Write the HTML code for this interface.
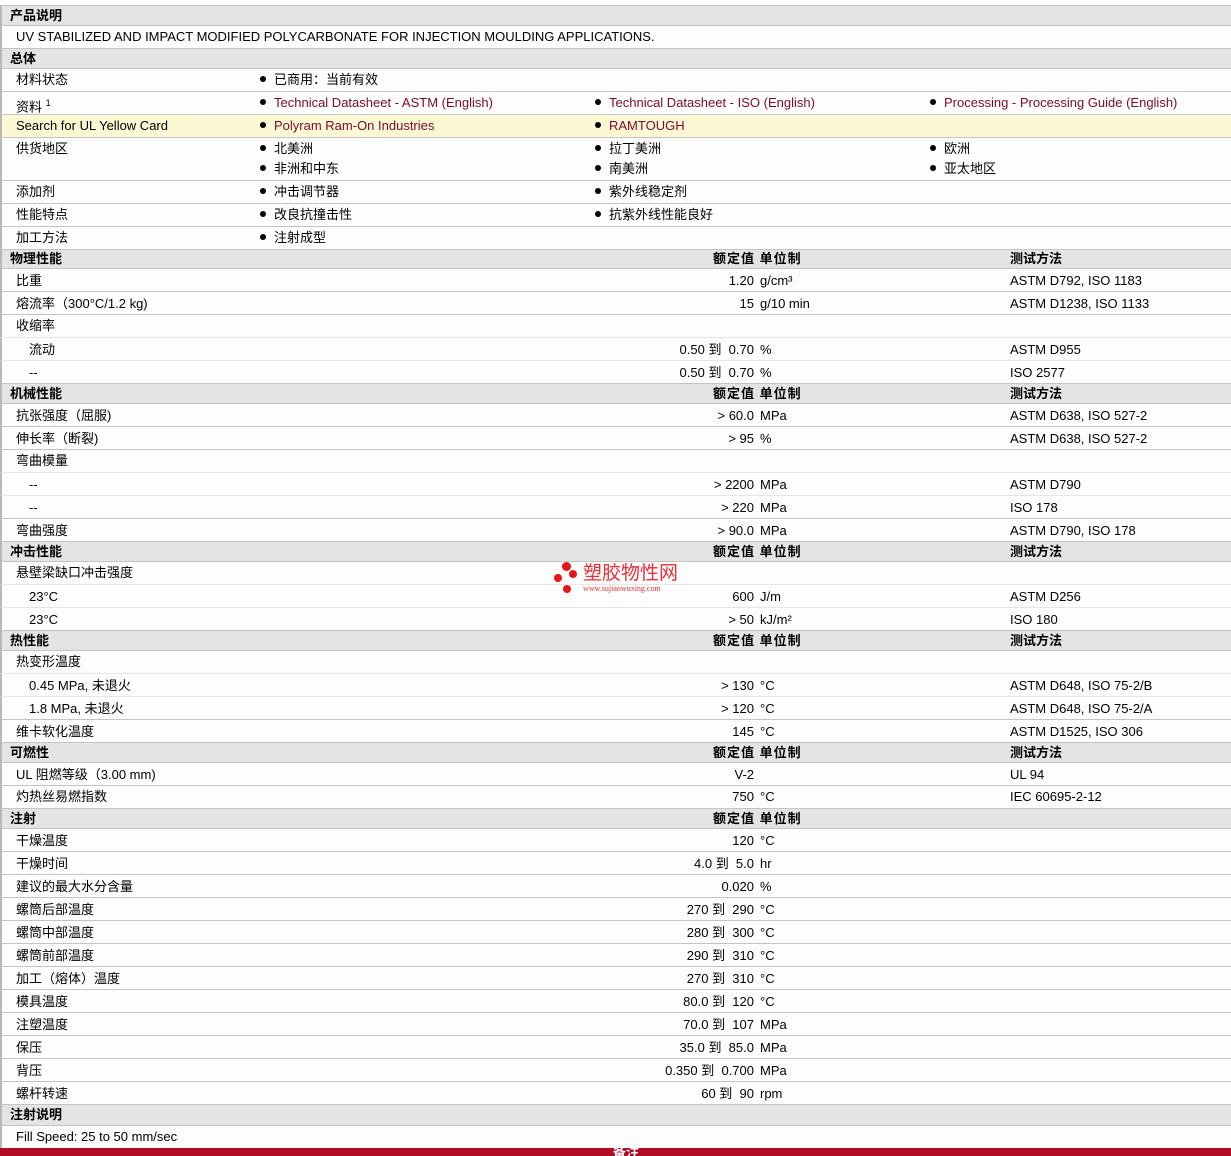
<!DOCTYPE html>
<html><head><meta charset="utf-8">
<style>
*{margin:0;padding:0;box-sizing:border-box}
body{width:1231px;height:1156px;overflow:hidden;background:#fdfdfb;font-family:"Liberation Sans","Noto Sans CJK SC",sans-serif;font-size:13px;color:#000;position:relative}
.r{position:absolute;left:0;width:1231px;border-bottom:1px solid #c4c4c4;border-left:2px solid #b8b8b8}
.h{background:#e4e4e4;font-weight:bold}
.s{border-bottom-color:#e6e6e6}
.r span{position:absolute;white-space:nowrap}
.l{left:14px}.i{left:27px}.hl{left:8px}
.v{right:477px;text-align:right}
.u{left:758px}
.t{left:1008px}
.hv{left:711px;letter-spacing:1px}
.b1{left:258px}.b2{left:593px}.b3{left:928px}
.b1::before,.b2::before,.b3::before{content:"";display:inline-block;width:6px;height:6px;border-radius:3px;background:#000;margin-right:8px;vertical-align:2px}
.a{color:#7a0a2e}
</style></head><body>
<div class="r h" style="top:5px;height:21px;line-height:20px;border-top:1px solid #c4c4c4"><span class="hl">产品说明</span></div>
<div class="r" style="top:26px;height:23px;line-height:22px"><span class="l">UV STABILIZED AND IMPACT MODIFIED POLYCARBONATE FOR INJECTION MOULDING APPLICATIONS.</span></div>
<div class="r h" style="top:49px;height:20px;line-height:19px"><span class="hl">总体</span></div>
<div class="r" style="top:69px;height:23px;line-height:22px"><span class="l">材料状态</span><span class="b1">已商用：当前有效</span></div>
<div class="r" style="top:92px;height:23px;line-height:22px"><span class="l">资料 <sup style="font-size:9px">1</sup></span><span class="b1 a">Technical Datasheet - ASTM (English)</span><span class="b2 a">Technical Datasheet - ISO (English)</span><span class="b3 a">Processing - Processing Guide (English)</span></div>
<div class="r" style="top:115px;height:23px;line-height:22px;background:#fdf8d4"><span class="l">Search for UL Yellow Card</span><span class="b1 a">Polyram Ram-On Industries</span><span class="b2 a">RAMTOUGH</span></div>
<div class="r" style="top:138px;height:43px;line-height:21px"><span class="l">供货地区</span><span class="b1">北美洲<br></span><span class="b2">拉丁美洲</span><span class="b3">欧洲</span><span class="b1" style="top:20px">非洲和中东</span><span class="b2" style="top:20px">南美洲</span><span class="b3" style="top:20px">亚太地区</span></div>
<div class="r" style="top:181px;height:23px;line-height:22px"><span class="l">添加剂</span><span class="b1">冲击调节器</span><span class="b2">紫外线稳定剂</span></div>
<div class="r" style="top:204px;height:23px;line-height:22px"><span class="l">性能特点</span><span class="b1">改良抗撞击性</span><span class="b2">抗紫外线性能良好</span></div>
<div class="r" style="top:227px;height:23px;line-height:22px"><span class="l">加工方法</span><span class="b1">注射成型</span></div>

<div class="r h" style="top:250px;height:19px;line-height:18px"><span class="hl">物理性能</span><span class="hv">额定值 单位制</span><span class="t">测试方法</span></div>
<div class="r" style="top:269px;height:23px;line-height:24px"><span class="l">比重</span><span class="v">1.20</span><span class="u">g/cm³</span><span class="t">ASTM D792, ISO 1183</span></div>
<div class="r" style="top:292px;height:23px;line-height:24px"><span class="l">熔流率（300°C/1.2 kg)</span><span class="v">15</span><span class="u">g/10 min</span><span class="t">ASTM D1238, ISO 1133</span></div>
<div class="r s" style="top:315px;height:23px;line-height:22px"><span class="l">收缩率</span></div>
<div class="r s" style="top:338px;height:23px;line-height:24px"><span class="i">流动</span><span class="v">0.50 到&nbsp; 0.70</span><span class="u">%</span><span class="t">ASTM D955</span></div>
<div class="r" style="top:361px;height:23px;line-height:24px"><span class="i">--</span><span class="v">0.50 到&nbsp; 0.70</span><span class="u">%</span><span class="t">ISO 2577</span></div>

<div class="r h" style="top:384px;height:20px;line-height:19px"><span class="hl">机械性能</span><span class="hv">额定值 单位制</span><span class="t">测试方法</span></div>
<div class="r" style="top:404px;height:23px;line-height:24px"><span class="l">抗张强度（屈服)</span><span class="v">&gt; 60.0</span><span class="u">MPa</span><span class="t">ASTM D638, ISO 527-2</span></div>
<div class="r" style="top:427px;height:23px;line-height:24px"><span class="l">伸长率（断裂)</span><span class="v">&gt; 95</span><span class="u">%</span><span class="t">ASTM D638, ISO 527-2</span></div>
<div class="r s" style="top:450px;height:23px;line-height:22px"><span class="l">弯曲模量</span></div>
<div class="r s" style="top:473px;height:23px;line-height:24px"><span class="i">--</span><span class="v">&gt; 2200</span><span class="u">MPa</span><span class="t">ASTM D790</span></div>
<div class="r" style="top:496px;height:23px;line-height:24px"><span class="i">--</span><span class="v">&gt; 220</span><span class="u">MPa</span><span class="t">ISO 178</span></div>
<div class="r" style="top:519px;height:23px;line-height:24px"><span class="l">弯曲强度</span><span class="v">&gt; 90.0</span><span class="u">MPa</span><span class="t">ASTM D790, ISO 178</span></div>

<div class="r h" style="top:542px;height:20px;line-height:19px"><span class="hl">冲击性能</span><span class="hv">额定值 单位制</span><span class="t">测试方法</span></div>
<div class="r s" style="top:562px;height:23px;line-height:22px"><span class="l">悬壁梁缺口冲击强度</span></div>
<div class="r s" style="top:585px;height:23px;line-height:24px"><span class="i">23°C</span><span class="v">600</span><span class="u">J/m</span><span class="t">ASTM D256</span></div>
<div class="r" style="top:608px;height:23px;line-height:24px"><span class="i">23°C</span><span class="v">&gt; 50</span><span class="u">kJ/m²</span><span class="t">ISO 180</span></div>

<div class="r h" style="top:631px;height:20px;line-height:19px"><span class="hl">热性能</span><span class="hv">额定值 单位制</span><span class="t">测试方法</span></div>
<div class="r s" style="top:651px;height:23px;line-height:22px"><span class="l">热变形温度</span></div>
<div class="r s" style="top:674px;height:23px;line-height:24px"><span class="i">0.45 MPa, 未退火</span><span class="v">&gt; 130</span><span class="u">°C</span><span class="t">ASTM D648, ISO 75-2/B</span></div>
<div class="r" style="top:697px;height:23px;line-height:24px"><span class="i">1.8 MPa, 未退火</span><span class="v">&gt; 120</span><span class="u">°C</span><span class="t">ASTM D648, ISO 75-2/A</span></div>
<div class="r" style="top:720px;height:23px;line-height:24px"><span class="l">维卡软化温度</span><span class="v">145</span><span class="u">°C</span><span class="t">ASTM D1525, ISO 306</span></div>

<div class="r h" style="top:743px;height:20px;line-height:19px"><span class="hl">可燃性</span><span class="hv">额定值 单位制</span><span class="t">测试方法</span></div>
<div class="r" style="top:763px;height:23px;line-height:24px"><span class="l">UL 阻燃等级（3.00 mm)</span><span class="v">V-2</span><span class="t">UL 94</span></div>
<div class="r" style="top:786px;height:23px;line-height:22px"><span class="l">灼热丝易燃指数</span><span class="v">750</span><span class="u">°C</span><span class="t">IEC 60695-2-12</span></div>

<div class="r h" style="top:809px;height:20px;line-height:19px"><span class="hl">注射</span><span class="hv">额定值 单位制</span></div>
<div class="r" style="top:829px;height:23px;line-height:24px"><span class="l">干燥温度</span><span class="v">120</span><span class="u">°C</span></div>
<div class="r" style="top:852px;height:23px;line-height:24px"><span class="l">干燥时间</span><span class="v">4.0 到&nbsp; 5.0</span><span class="u">hr</span></div>
<div class="r" style="top:875px;height:23px;line-height:24px"><span class="l">建议的最大水分含量</span><span class="v">0.020</span><span class="u">%</span></div>
<div class="r" style="top:898px;height:23px;line-height:24px"><span class="l">螺筒后部温度</span><span class="v">270 到&nbsp; 290</span><span class="u">°C</span></div>
<div class="r" style="top:921px;height:23px;line-height:24px"><span class="l">螺筒中部温度</span><span class="v">280 到&nbsp; 300</span><span class="u">°C</span></div>
<div class="r" style="top:944px;height:23px;line-height:24px"><span class="l">螺筒前部温度</span><span class="v">290 到&nbsp; 310</span><span class="u">°C</span></div>
<div class="r" style="top:967px;height:23px;line-height:24px"><span class="l">加工（熔体）温度</span><span class="v">270 到&nbsp; 310</span><span class="u">°C</span></div>
<div class="r" style="top:990px;height:23px;line-height:24px"><span class="l">模具温度</span><span class="v">80.0 到&nbsp; 120</span><span class="u">°C</span></div>
<div class="r" style="top:1013px;height:23px;line-height:24px"><span class="l">注塑温度</span><span class="v">70.0 到&nbsp; 107</span><span class="u">MPa</span></div>
<div class="r" style="top:1036px;height:23px;line-height:24px"><span class="l">保压</span><span class="v">35.0 到&nbsp; 85.0</span><span class="u">MPa</span></div>
<div class="r" style="top:1059px;height:23px;line-height:24px"><span class="l">背压</span><span class="v">0.350 到&nbsp; 0.700</span><span class="u">MPa</span></div>
<div class="r" style="top:1082px;height:23px;line-height:24px"><span class="l">螺杆转速</span><span class="v">60 到&nbsp; 90</span><span class="u">rpm</span></div>
<div class="r h" style="top:1105px;height:21px;line-height:20px"><span class="hl">注射说明</span></div>
<div class="r" style="top:1126px;height:22px;line-height:22px;border-bottom:none"><span class="l">Fill Speed: 25 to 50 mm/sec</span></div>
<div style="position:absolute;top:1148px;left:0;width:1231px;height:8px;background:#b30c26;overflow:hidden"><div style="position:absolute;left:613px;top:-2px;color:#fff;font-weight:bold;font-size:13px;line-height:14px">备注</div></div>

<div style="position:absolute;left:554px;top:564px;width:140px;height:34px">
<div style="position:absolute;left:8px;top:-2px;width:9px;height:9px;border-radius:50%;background:#e8141c"></div>
<div style="position:absolute;left:15px;top:6px;width:8px;height:8px;border-radius:50%;background:#e8141c"></div>
<div style="position:absolute;left:0;top:10px;width:8px;height:8px;border-radius:50%;background:#e8141c"></div>
<div style="position:absolute;left:9px;top:21px;width:8px;height:8px;border-radius:50%;background:#e8141c"></div>
<div style="position:absolute;left:29px;top:-1px;color:#e8303a;font-size:19px;line-height:22px;white-space:nowrap">塑胶物性网</div>
<div style="position:absolute;left:29px;top:20px;color:#e8303a;font-size:8px;line-height:10px;font-family:'Liberation Serif',serif;white-space:nowrap">www.sujiaowuxing.com</div>
</div>
</body></html>
